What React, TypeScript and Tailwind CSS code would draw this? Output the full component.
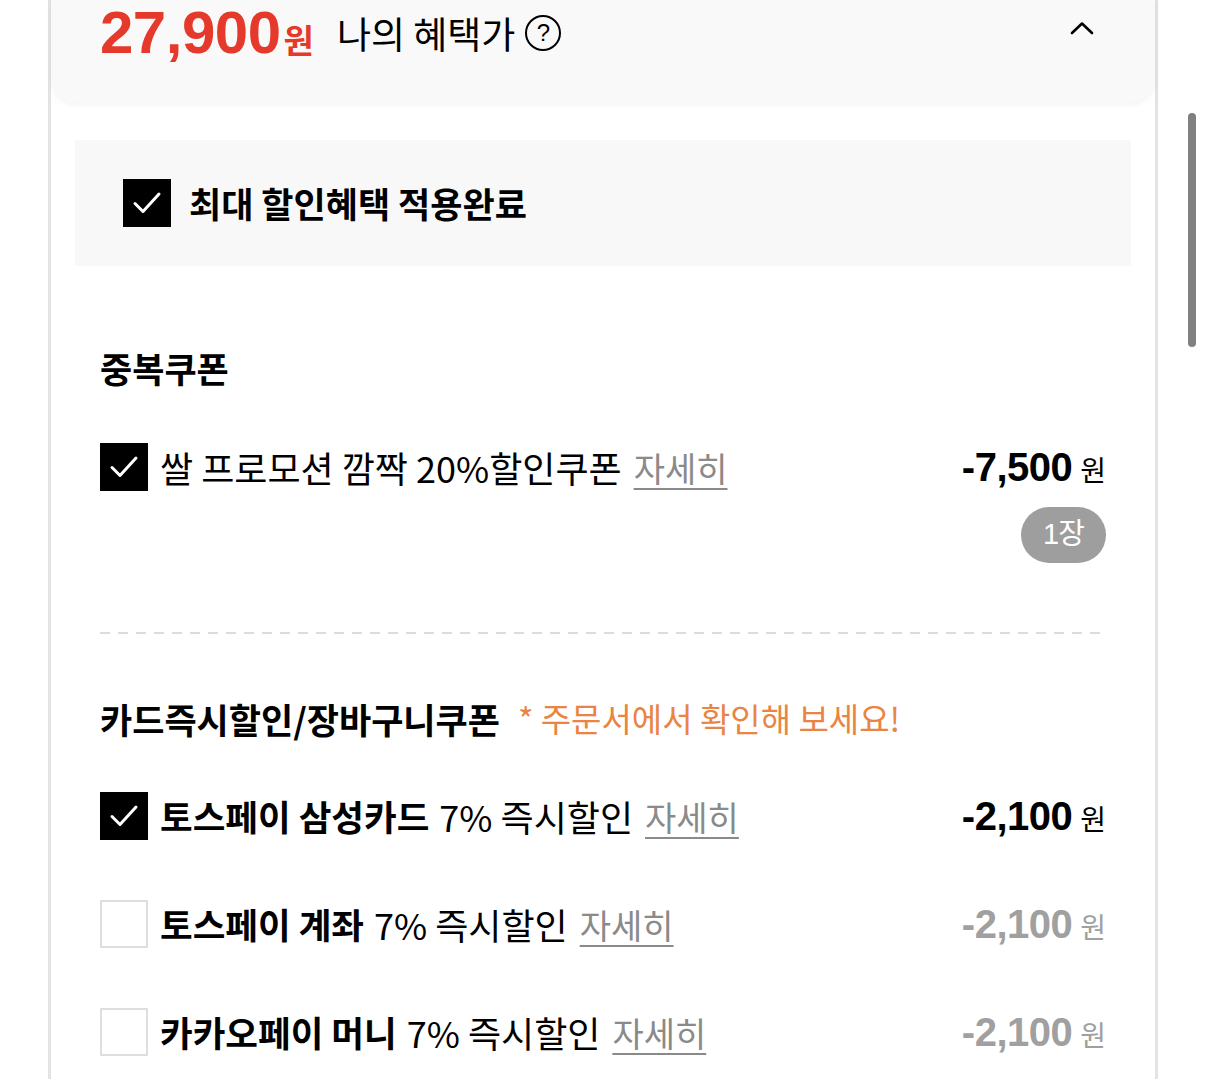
import React from 'react';

const KR = '[font-family:"Noto_Sans_CJK_KR","Noto_Sans",sans-serif]';
const NUM = '[font-family:"Liberation_Sans","Noto_Sans_CJK_KR",sans-serif]';

const CheckBox: React.FC<{ checked?: boolean }> = ({ checked }) =>
  checked ? (
    <div className="w-[48px] h-[48px] shrink-0 bg-black flex items-center justify-center">
      <svg width="36" height="36" viewBox="0 0 36 36" fill="none">
        <path d="M6 18.5 L14 26.5 L30 9" stroke="white" strokeWidth="3" strokeLinecap="round" strokeLinejoin="round" />
      </svg>
    </div>
  ) : (
    <div className="w-[48px] h-[48px] shrink-0 bg-white border-2 border-[#dedede]" />
  );

const Detail: React.FC = () => (
  <span className="ml-[12px] text-[34px] text-[#8a8a8a] underline decoration-2 underline-offset-[6px]">
    자세히
  </span>
);

const Amount: React.FC<{ value: string; dim?: boolean }> = ({ value, dim }) => (
  <div className={`flex items-baseline ${dim ? 'text-[#a0a0a0]' : 'text-black'}`}>
    <span className={`${NUM} font-bold text-[40px] tracking-[-0.5px]`}>{value}</span>
    <span className="ml-[8px] text-[28px]">원</span>
  </div>
);

type CardRow = { bold: string; rest: string; checked: boolean };

const cardRows: CardRow[] = [
  { bold: '토스페이 삼성카드', rest: '7% 즉시할인', checked: true },
  { bold: '토스페이 계좌', rest: '7% 즉시할인', checked: false },
  { bold: '카카오페이 머니', rest: '7% 즉시할인', checked: false },
];

const App: React.FC = () => {
  return (
    <div className={`relative w-[1206px] h-[1079px] overflow-hidden bg-white ${KR}`}>
      {/* panel */}
      <div className="ml-[48px] w-[1110px] h-full border-x-[3px] border-[#e3e3e3]">
        {/* header card */}
        <div className="h-[103px] bg-[#f9f9f9] rounded-b-[26px] shadow-[0_2px_6px_rgba(0,0,0,0.05)] flex items-start justify-between pl-[49px] pr-[60px]">
          <div className="h-[66px] flex items-center">
            <div className="flex items-baseline text-[#e5392b]">
              <span className={`${NUM} font-bold text-[60px] leading-none tracking-[-0.5px]`}>27,900</span>
              <span className="font-bold text-[33px] leading-none tracking-[-1px] ml-[3px]">원</span>
            </div>
            <span className="ml-[24px] text-[37px] leading-none text-black">나의 혜택가</span>
            <span className="ml-[10px] w-[36px] h-[36px] rounded-full border-2 border-black flex items-center justify-center">
              <span className={`${NUM} text-[24px] leading-none font-normal`}>?</span>
            </span>
          </div>
          <svg className="mt-[20px]" width="26" height="16" viewBox="0 0 26 16" fill="none">
            <path d="M3 13 L13 3.5 L23 13" stroke="black" strokeWidth="2.6" strokeLinecap="round" strokeLinejoin="round" />
          </svg>
        </div>

        {/* max discount box */}
        <div className="mx-[24px] mt-[37px] h-[126px] bg-[#f8f8f8] flex items-center pl-[48px]">
          <CheckBox checked />
          <span className="ml-[18px] font-bold text-[35px] text-black">최대 할인혜택 적용완료</span>
        </div>

        <div className="px-[49px]">
          {/* duplicate coupons */}
          <div className="mt-[82px] h-[40px] flex items-center font-bold text-[35px] text-black">중복쿠폰</div>

          <div className="mt-[55px] h-[48px] flex items-center justify-between">
            <div className="flex items-center">
              <CheckBox checked />
              <span className="ml-[12px] text-[36px] text-black">쌀 프로모션 깜짝 20%할인쿠폰</span>
              <Detail />
            </div>
            <Amount value="-7,500" />
          </div>
          <div className="mt-[16px] flex justify-end">
            <div className={`${NUM} w-[85px] h-[56px] rounded-full bg-[#9e9e9e] flex items-center justify-center text-white text-[29px] tracking-[-1px]`}>
              1장
            </div>
          </div>

          <div className="mt-[69px] h-[2px] bg-[linear-gradient(to_right,#dcdcdc_10px,transparent_10px)] bg-[length:18px_2px]" />

          {/* card discounts */}
          <div className="mt-[65px] h-[40px] flex items-center">
            <span className="font-bold text-[35px] text-black">카드즉시할인/장바구니쿠폰</span>
            <span className="ml-[18px] text-[33px] text-[#ea8442]">* 주문서에서 확인해 보세요!</span>
          </div>

          <div className="mt-[53px] flex flex-col gap-[60px]">
            {cardRows.map((r) => (
              <div key={r.bold} className="h-[48px] flex items-center justify-between">
                <div className="flex items-center">
                  <CheckBox checked={r.checked} />
                  <span className="ml-[12px] font-bold text-[35.5px] text-black">{r.bold}</span>
                  <span className="ml-[10px] text-[36px] text-black">{r.rest}</span>
                  <Detail />
                </div>
                <Amount value="-2,100" dim={!r.checked} />
              </div>
            ))}
          </div>
        </div>
      </div>

      {/* scrollbar */}
      <div className="absolute left-[1188px] top-[113px] w-[8px] h-[234px] rounded-full bg-[#808080]" />
    </div>
  );
};

export default App;
